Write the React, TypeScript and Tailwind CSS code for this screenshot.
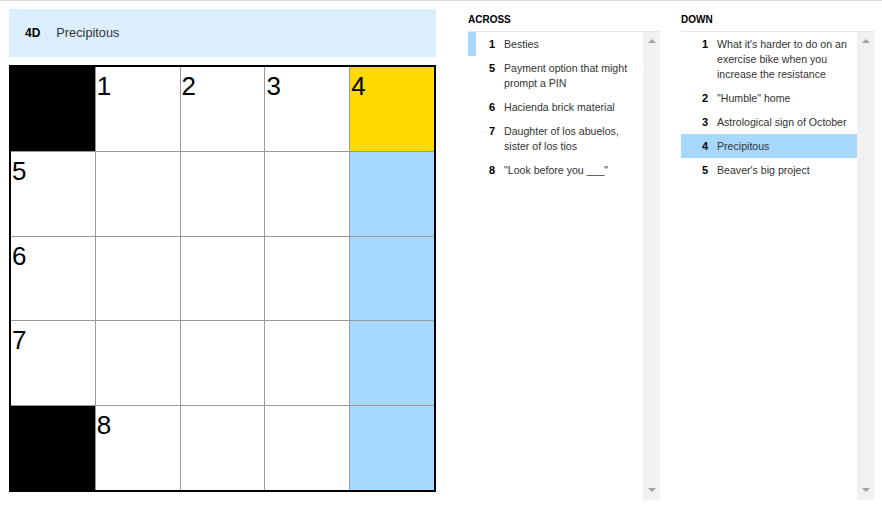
import React from "react";

type Clue = { n: number; text: string };

const across: Clue[] = [
  { n: 1, text: "Besties" },
  { n: 5, text: "Payment option that might prompt a PIN" },
  { n: 6, text: "Hacienda brick material" },
  { n: 7, text: "Daughter of los abuelos, sister of los tios" },
  { n: 8, text: "\"Look before you ___\"" },
];

const down: Clue[] = [
  { n: 1, text: "What it's harder to do on an exercise bike when you increase the resistance" },
  { n: 2, text: "\"Humble\" home" },
  { n: 3, text: "Astrological sign of October" },
  { n: 4, text: "Precipitous" },
  { n: 5, text: "Beaver's big project" },
];

type Cell = { black?: boolean; num?: number; hl?: "yellow" | "blue" };

const grid: Cell[][] = [
  [{ black: true }, { num: 1 }, { num: 2 }, { num: 3 }, { num: 4, hl: "yellow" }],
  [{ num: 5 }, {}, {}, {}, { hl: "blue" }],
  [{ num: 6 }, {}, {}, {}, { hl: "blue" }],
  [{ num: 7 }, {}, {}, {}, { hl: "blue" }],
  [{ black: true }, { num: 8 }, {}, {}, { hl: "blue" }],
];

function Scrollbar() {
  return (
    <div className="w-[17px] bg-[#f1f1f1] flex flex-col items-center justify-between pt-[7px] pb-[8px]">
      <svg width="8" height="4" viewBox="0 0 8 4">
        <polygon points="0,4 8,4 4,0" fill="#a3a3a3" />
      </svg>
      <svg width="8" height="4" viewBox="0 0 8 4">
        <polygon points="0,0 8,0 4,4" fill="#a3a3a3" />
      </svg>
    </div>
  );
}

function ClueList({
  title,
  clues,
  mode,
  width,
}: {
  title: string;
  clues: Clue[];
  mode: "across" | "down";
  width: string;
}) {
  return (
    <div className={`${width} flex flex-col h-[499px]`}>
      <div className="h-[31px] pt-[14px] text-[10px] leading-[10px] font-bold text-black border-b border-[#e6e6e6]">
        {title}
      </div>
      <div className="flex-1 flex">
        <div className="flex-1 flex flex-col">
          {clues.map((c) => {
            const acrossActive = mode === "across" && c.n === 1;
            const downActive = mode === "down" && c.n === 4;
            return (
              <div
                key={c.n}
                className={`flex py-[4.5px] pr-[8px] ${
                  mode === "across"
                    ? `border-l-[8px] pl-[13px] ${acrossActive ? "border-[#a7d8ff]" : "border-transparent"}`
                    : "pl-[21px]"
                } ${downActive ? "bg-[#a7d8ff]" : ""}`}
              >
                <span className="w-[15px] shrink-0 font-bold text-[11px] leading-[15px] text-black">
                  {c.n}
                </span>
                <span className="text-[10.6px] leading-[15px] text-[#333]">
                  {c.text}
                </span>
              </div>
            );
          })}
        </div>
        <Scrollbar />
      </div>
    </div>
  );
}

export default function App() {
  return (
    <div className="w-[882px] h-[506px] bg-white border-t border-[#dcdcdc] flex font-['Liberation_Sans',Arial,sans-serif] overflow-hidden">
      <div className="ml-[9px] mt-2 w-[427px] flex flex-col gap-2">
        <div className="h-[48px] bg-[#dcefff] flex items-center pl-[16px]">
          <span className="font-bold text-[12px] text-black">4D</span>
          <span className="ml-[16px] text-[12.75px] text-[#333]">Precipitous</span>
        </div>
        <div className="w-[427px] h-[427px] border-2 border-black bg-[#999] grid grid-cols-5 grid-rows-5 gap-px">
          {grid.flatMap((row, r) =>
            row.map((cell, c) => (
              <div
                key={`${r}-${c}`}
                className={`pl-px pt-[6px] ${
                  cell.black
                    ? "bg-black"
                    : cell.hl === "yellow"
                    ? "bg-[#ffda00]"
                    : cell.hl === "blue"
                    ? "bg-[#a7d8ff]"
                    : "bg-white"
                }`}
              >
                {cell.num !== undefined && (
                  <span className="block text-[26px] leading-none text-black">{cell.num}</span>
                )}
              </div>
            ))
          )}
        </div>
      </div>
      <div className="ml-[32px]">
        <ClueList title="ACROSS" clues={across} mode="across" width="w-[192px]" />
      </div>
      <div className="ml-[21px]">
        <ClueList title="DOWN" clues={down} mode="down" width="w-[193px]" />
      </div>
    </div>
  );
}
